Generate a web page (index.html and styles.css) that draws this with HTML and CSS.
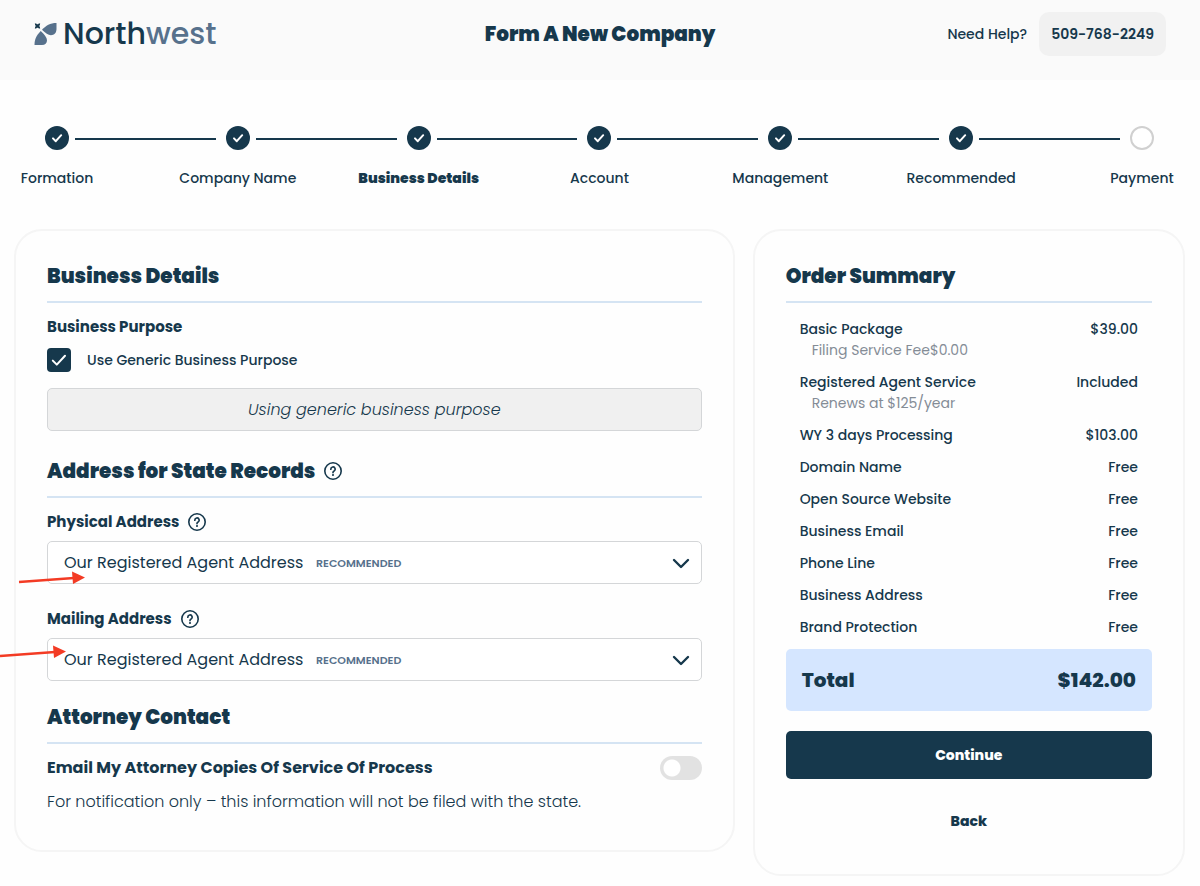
FILE: index.html
```html
<!DOCTYPE html>
<html lang="en">
<head>
<meta charset="utf-8">
<meta name="viewport" content="width=device-width, initial-scale=1">
<title>Form A New Company</title>
<link rel="stylesheet" href="styles.css">
</head>
<body>
<svg class="sprite" aria-hidden="true">
  <symbol id="tick" viewBox="0 0 24 24"><path d="M8 12.4l2.8 2.8 5.4-6" fill="none" stroke="currentColor" stroke-width="2" stroke-linecap="round" stroke-linejoin="round"/></symbol>
  <symbol id="tick-wide" viewBox="0 0 24 24"><path d="M5.800 12.600l4 4 8.200-8.800" fill="none" stroke="currentColor" stroke-width="2" stroke-linecap="round" stroke-linejoin="round"/></symbol>
  <symbol id="help" viewBox="0 0 20 20"><circle cx="10" cy="10" r="8.2" fill="none" stroke="currentColor" stroke-width="1.6"/><path d="M7.8 8.2a2.2 2.2 0 1 1 3.3 1.9c-.8.4-1.1.8-1.1 1.5" fill="none" stroke="currentColor" stroke-width="1.7" stroke-linecap="round"/><circle cx="10" cy="14" r="1.05" fill="currentColor"/></symbol>
  <symbol id="chevron" viewBox="0 0 18 12"><path d="M2 2l7 7 7-7" fill="none" stroke="currentColor" stroke-width="2.4" stroke-linecap="round" stroke-linejoin="round"/></symbol>
</svg>

<header class="topbar">
  <a class="logo" href="#" aria-label="Northwest">
    <svg class="logo-mark" viewBox="0 0 22 22" aria-hidden="true">
      <path d="M22 0v6c0 3.800-2.300 6.200-5.600 6.200-2.600 0-5.400-2.200-8.900-5.400C11.500 2.500 15.500 0 22 0z" fill="#57718c"/>
      <path d="M6.200 8c3.800 3.600 6.300 6.600 6.300 9.300 0 3-1.900 4.700-5 4.700H0c0-6 2-9.500 6.200-14z" fill="#57718c"/>
      <path d="M.8.800l2.200.9 2.200-.9-.9 2.200.9 2.200-2.200-.9-2.200.9.900-2.200z" fill="#16384c" stroke="#16384c"/>
    </svg>
    <span class="logo-text">North<span class="logo-soft">west</span></span>
  </a>
  <h1 class="page-title">Form A New Company</h1>
  <div class="support">
    <span>Need Help?</span>
    <a class="phone" href="tel:5097682249">509-768-2249</a>
  </div>
</header>

<ol class="steps">
  <li class="step"><span class="dot"><svg><use href="#tick"/></svg></span><span>Formation</span></li>
  <li class="line" aria-hidden="true"></li>
  <li class="step"><span class="dot"><svg><use href="#tick"/></svg></span><span>Company Name</span></li>
  <li class="line" aria-hidden="true"></li>
  <li class="step current" aria-current="step"><span class="dot"><svg><use href="#tick"/></svg></span><span>Business Details</span></li>
  <li class="line" aria-hidden="true"></li>
  <li class="step"><span class="dot"><svg><use href="#tick"/></svg></span><span>Account</span></li>
  <li class="line" aria-hidden="true"></li>
  <li class="step"><span class="dot"><svg><use href="#tick"/></svg></span><span>Management</span></li>
  <li class="line" aria-hidden="true"></li>
  <li class="step"><span class="dot"><svg><use href="#tick"/></svg></span><span>Recommended</span></li>
  <li class="line" aria-hidden="true"></li>
  <li class="step"><span class="dot todo"></span><span>Payment</span></li>
</ol>

<main class="layout">
  <form class="card">
    <section>
      <h2 class="heading">Business Details</h2>
      <h3 class="label">Business Purpose</h3>
      <label class="check"><input type="checkbox" checked><svg><use href="#tick-wide"/></svg><span>Use Generic Business Purpose</span></label>
      <input class="field purpose" type="text" value="Using generic business purpose" aria-label="Business purpose" disabled>
    </section>

    <section>
      <h2 class="heading">Address for State Records <svg class="help"><use href="#help"/></svg></h2>
      <div class="group">
        <label class="label" for="physical">Physical Address <svg class="help"><use href="#help"/></svg></label>
        <div class="picker">
          <select class="field" id="physical"><option>Our Registered Agent Address</option></select>
          <span class="tag">RECOMMENDED</span>
          <svg class="chevron"><use href="#chevron"/></svg>
          <svg class="arrow arrow-physical" viewBox="0 0 68 14" aria-hidden="true"><path d="M1 11L56 7" stroke="#f33b24" stroke-width="2.4"/><path d="M54 0.500l13 6-12 6.500z" fill="#f33b24"/></svg>
        </div>
      </div>
      <div class="group">
        <label class="label" for="mailing">Mailing Address <svg class="help"><use href="#help"/></svg></label>
        <div class="picker">
          <select class="field" id="mailing"><option>Our Registered Agent Address</option></select>
          <span class="tag">RECOMMENDED</span>
          <svg class="chevron"><use href="#chevron"/></svg>
          <svg class="arrow arrow-mailing" viewBox="0 0 68 14" aria-hidden="true"><path d="M1 11L56 7" stroke="#f33b24" stroke-width="2.4"/><path d="M54 0.500l13 6-12 6.500z" fill="#f33b24"/></svg>
        </div>
      </div>
    </section>

    <section>
      <h2 class="heading">Attorney Contact</h2>
      <div class="toggle-row">
        <label class="label label-large" for="attorney">Email My Attorney Copies Of Service Of Process</label>
        <input class="toggle" id="attorney" type="checkbox" role="switch">
      </div>
      <p class="note">For notification only – this information will not be filed with the state.</p>
    </section>
  </form>

  <aside class="card">
    <h2 class="heading">Order Summary</h2>
    <ul class="items">
      <li><span>Basic Package<small>Filing Service Fee$0.00</small></span><span>$39.00</span></li>
      <li><span>Registered Agent Service<small>Renews at $125/year</small></span><span>Included</span></li>
      <li><span>WY 3 days Processing</span><span>$103.00</span></li>
      <li><span>Domain Name</span><span>Free</span></li>
      <li><span>Open Source Website</span><span>Free</span></li>
      <li><span>Business Email</span><span>Free</span></li>
      <li><span>Phone Line</span><span>Free</span></li>
      <li><span>Business Address</span><span>Free</span></li>
      <li><span>Brand Protection</span><span>Free</span></li>
    </ul>
    <div class="total"><span>Total</span><span>$142.00</span></div>
    <button class="btn primary" type="button">Continue</button>
    <button class="btn" type="button">Back</button>
  </aside>
</main>
</body>
</html>
```
FILE: styles.css
```css
:root {
  --ink: #16384c;
  --slate: #57718c;
}
* { box-sizing: border-box; }
body {
  margin: 0;
  background: #fefefe;
  color: var(--ink);
  font: 500 14px/24px Poppins, Inter, "Open Sans", sans-serif;
}
h1, h2, h3, p, ol, ul { margin: 0; padding: 0; }
ol, ul { list-style: none; }
button, input, select { font: inherit; color: inherit; }
.sprite { display: none; }

.topbar {
  display: grid;
  grid-template-columns: 1fr auto 1fr;
  align-items: center;
  height: 80px;
  padding: 0 34px 12px;
  background: #fafafa;
}
.logo { display: flex; align-items: center; gap: 6px; color: var(--ink); text-decoration: none; }
.logo-mark { width: 23px; height: 22px; }
.logo-text { font-size: 30px; line-height: 40px; font-weight: 500; }
.logo-soft { color: var(--slate); }
.page-title { font-size: 20px; line-height: 32px; font-weight: 900; }
.support { display: flex; justify-content: flex-end; align-items: center; gap: 12px; }
.phone {
  padding: 10px 12px;
  border-radius: 10px;
  background: #f1f1f1;
  color: inherit;
  font-weight: 600;
  text-decoration: none;
}

.steps { display: flex; padding: 46px 46px 39px 45px; }
.step {
  display: flex;
  flex-direction: column;
  align-items: center;
  gap: 16px;
  width: 24px;
  white-space: nowrap;
}
.current { font-weight: 900; }
.dot { width: 24px; height: 24px; border-radius: 50%; background: var(--ink); color: #fff; }
.dot svg { display: block; width: 24px; height: 24px; }
.todo { border: 2px solid #d0d0d0; background: #fff; }
.line { flex: 1; height: 2px; margin: 12px 10px 0 6px; background: var(--ink); }

.layout {
  display: grid;
  grid-template-columns: 5fr 3fr;
  gap: 18px;
  align-items: start;
  padding: 0 15px 10px 14px;
}
.card {
  display: grid;
  padding: 29px 31px;
  border: 2px solid #f5f5f5;
  border-radius: 28px;
}
form.card { gap: 20px; padding-bottom: 36px; }
.heading {
  display: flex;
  align-items: center;
  gap: 8px;
  margin-bottom: 12px;
  padding-bottom: 9px;
  border-bottom: 2px solid #d5e4f3;
  font-size: 20px;
  line-height: 32px;
  font-weight: 900;
}
.label { display: flex; align-items: center; gap: 8px; font-size: 15px; font-weight: 700; }
.label-large { font-size: 16px; }
.help { width: 20px; height: 20px; }
.check { display: flex; align-items: center; gap: 16px; position: relative; margin: 9px 0 16px; }
.check input { appearance: none; width: 24px; height: 24px; margin: 0; border-radius: 4px; background: var(--ink); }
.check svg { position: absolute; left: 0; top: 0; width: 24px; height: 24px; color: #fff; }
.field {
  display: block;
  width: 100%;
  height: 43px;
  padding: 0 16px;
  border: 1px solid #d4d6d8;
  border-radius: 5px;
  background: #fff;
  font-size: 16px;
  font-weight: 400;
  appearance: none;
}
.purpose { margin-bottom: 4px; background: #f0f0f0; font-weight: 300; font-style: italic; text-align: center; opacity: 1; }
.group { display: grid; gap: 7px; }
.group + .group { margin-top: 23px; }
.picker { position: relative; }
.tag { position: absolute; left: 269px; top: 10px; color: var(--slate); font-size: 11px; font-weight: 600; pointer-events: none; }
.chevron { position: absolute; right: 12px; top: 17px; width: 18px; height: 12px; pointer-events: none; }
.arrow { position: absolute; width: 68px; height: 14px; pointer-events: none; }
.arrow-physical { left: -29px; top: 30px; }
.arrow-mailing { left: -48px; top: 7px; }
.toggle-row { display: flex; justify-content: space-between; align-items: center; }
.toggle {
  appearance: none;
  width: 42px;
  height: 24px;
  margin: 0;
  border-radius: 12px;
  background: radial-gradient(circle at 12px 12px, #fff 8px, #e2e2e2 9px);
}
.note { margin-top: 10px; font-size: 16px; font-weight: 300; }

.items { display: grid; gap: 11px; padding: 4px 14px 11px; line-height: 21px; }
.items li { display: flex; justify-content: space-between; }
.items small { display: block; padding-left: 12px; color: #848c96; font-size: 14px; font-weight: 400; }
.total {
  display: flex;
  justify-content: space-between;
  align-items: center;
  height: 62px;
  padding: 0 16px;
  border-radius: 5px;
  background: #d5e6ff;
  font-size: 20px;
  font-weight: 800;
}
.btn { height: 48px; margin-top: 18px; border: 0; border-radius: 5px; background: none; font-weight: 800; }
.primary { margin-top: 20px; background: var(--ink); color: #fff; }
```
